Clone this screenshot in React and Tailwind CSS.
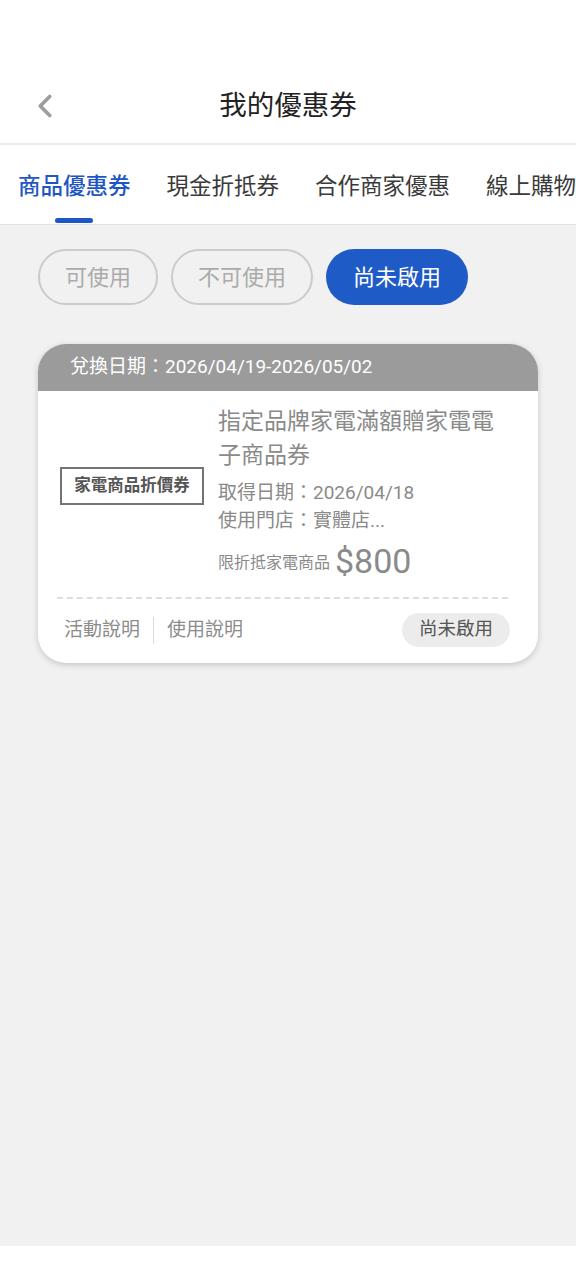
import { ChevronLeft } from "lucide-react";

const tabs = ["商品優惠券", "現金折抵券", "合作商家優惠", "線上購物"];
const filters = [
  { label: "可使用", active: false },
  { label: "不可使用", active: false },
  { label: "尚未啟用", active: true },
];

export default function App() {
  return (
    <div
      className="flex min-h-[1280px] w-[576px] flex-col bg-white"
      style={{ fontFamily: 'Roboto, "Noto Sans CJK TC", sans-serif' }}
    >
      {/* status bar space */}
      <div className="h-[65px]" />

      {/* header */}
      <header className="grid h-[80px] grid-cols-[90px_1fr_90px] items-center border-b-2 border-[#ebebeb] pt-[4px]">
        <div className="flex justify-center">
          <ChevronLeft size={38} strokeWidth={2.3} className="text-[#9d9d9d]" />
        </div>
        <h1 className="text-center text-[27.5px] text-[#222]">我的優惠券</h1>
        <div />
      </header>

      {/* tabs */}
      <nav className="flex h-[80px] overflow-hidden whitespace-nowrap border-b border-[#e2e2e2] pl-[18px]">
        {tabs.map((t, i) => (
          <div key={t} className="mr-[36px] flex shrink-0 flex-col items-center">
            <span
              className={
                "mt-[26px] text-[22.5px] leading-[30px] " +
                (i === 0 ? "font-medium text-[#1f57c2]" : "text-[#3a3a3a]")
              }
            >
              {t}
            </span>
            {i === 0 && <span className="mt-[17px] h-[5px] w-[38px] rounded-full bg-[#1f57c2]" />}
          </div>
        ))}
      </nav>

      <main className="flex-1 bg-[#f1f1f1] px-[38px] pt-[24px]">
        {/* filter pills */}
        <div className="flex gap-[13px]">
          {filters.map((f) =>
            f.active ? (
              <button key={f.label} className="h-[56px] rounded-full bg-[#1f5bc6] px-[27px] text-[22px] text-white">
                {f.label}
              </button>
            ) : (
              <button
                key={f.label}
                className="h-[56px] rounded-full border-2 border-[#cbcbcb] px-[25px] text-[22px] text-[#ababab]"
              >
                {f.label}
              </button>
            )
          )}
        </div>

        {/* coupon card */}
        <div className="mt-[39px] overflow-hidden rounded-[28px] bg-white shadow-[0_2px_6px_rgba(0,0,0,0.18)]">
          <div className="flex h-[47px] items-center bg-[#9b9b9b] pl-[32px] text-[19px] text-white">
            兌換日期：2026/04/19-2026/05/02
          </div>

          <div className="flex items-center pl-[22px]">
            <div className="w-[158px] shrink-0">
              <div className="flex h-[38px] w-[144px] items-center justify-center border-2 border-[#747474] bg-white text-[16.5px] font-bold text-[#555]">
                家電商品折價券
              </div>
            </div>
            <div className="flex-1 pr-[30px] pt-[14px]">
              <p className="text-[23px] leading-[34px] text-[#8a8a8a]">指定品牌家電滿額贈家電電子商品券</p>
              <p className="mt-[6px] text-[19px] leading-[28px] text-[#8a8a8a]">取得日期：2026/04/18</p>
              <p className="text-[19px] leading-[28px] text-[#8a8a8a]">使用門店：實體店...</p>
              <div className="mt-[6px] flex h-[40px] items-center text-[#8a8a8a]">
                <span className="pt-[4px] text-[16px]">限折抵家電商品</span>
                <span className="ml-[5px] text-[34px] leading-[40px]">$800</span>
              </div>
            </div>
          </div>

          <div className="ml-[19px] mr-[30px] mt-[16px] border-t-2 border-dashed border-[#dedede]" />

          <div className="flex items-center justify-between pb-[16px] pl-[26px] pr-[28px] pt-[14px]">
            <div className="flex items-center text-[19px] text-[#8c8c8c]">
              <span>活動說明</span>
              <span className="mx-[13px] h-[27px] w-px bg-[#dcdcdc]" />
              <span>使用說明</span>
            </div>
            <span className="flex h-[34px] items-center rounded-full bg-[#ececec] px-[17px] text-[18.5px] text-[#555]">
              尚未啟用
            </span>
          </div>
        </div>
      </main>

      <div className="h-[34px] bg-white" />
    </div>
  );
}
